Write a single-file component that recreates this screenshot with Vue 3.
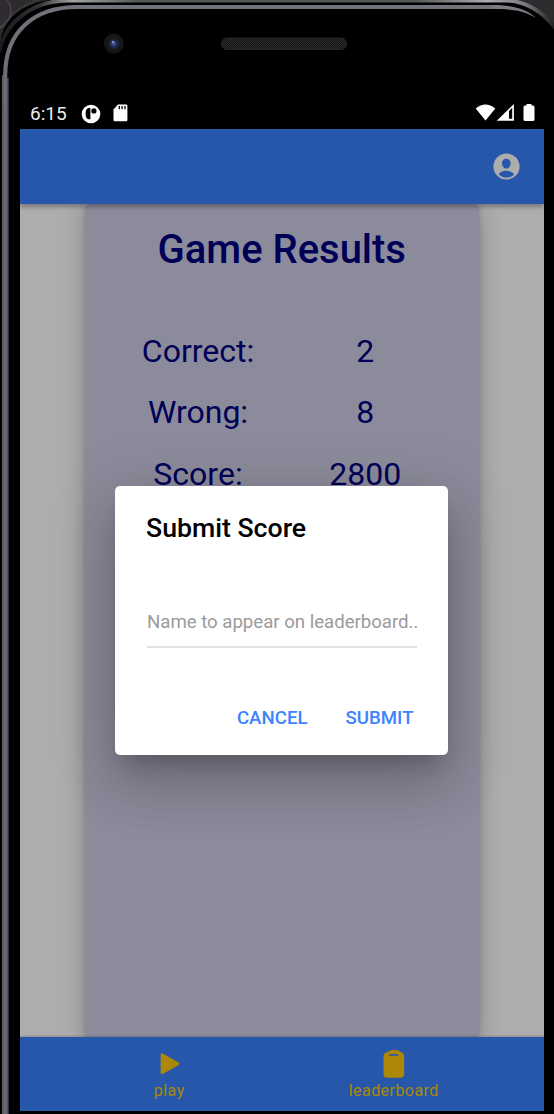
<script setup>
const results = [
  { label: 'Correct:', value: '2' },
  { label: 'Wrong:', value: '8' },
  { label: 'Score:', value: '2800' },
]
</script>

<template>
  <div class="device">
    <svg class="bezel" width="554" height="1114" viewBox="0 0 554 1114" aria-hidden="true">
      <defs>
        <linearGradient id="rim" x1="0" y1="0" x2="0" y2="120" gradientUnits="userSpaceOnUse">
          <stop offset="0" stop-color="#73747b" /><stop offset="1" stop-color="#656a73" />
        </linearGradient>
        <linearGradient id="outer" x1="0" y1="0" x2="554" y2="0" gradientUnits="userSpaceOnUse">
          <stop offset="0" stop-color="#1a1b1d" /><stop offset=".07" stop-color="#303234" />
          <stop offset=".13" stop-color="#a1a4a5" /><stop offset=".25" stop-color="#555858" />
          <stop offset=".75" stop-color="#555858" /><stop offset=".88" stop-color="#aaabb0" />
          <stop offset=".95" stop-color="#77777c" /><stop offset="1" stop-color="#222" />
        </linearGradient>
        <radialGradient id="lens"><stop offset="0" stop-color="#5968a0" /><stop offset=".35" stop-color="#303d70" /><stop offset=".8" stop-color="#182040" /><stop offset="1" stop-color="#252832" /></radialGradient>
        <pattern id="mesh" width="2" height="2" patternUnits="userSpaceOnUse">
          <rect width="2" height="2" fill="#171817" /><path d="M0 0h1v1H0zM1 1h1v1H1z" fill="#292b29" />
        </pattern>
      </defs>
      <rect width="554" height="1114" fill="#2c2c2e" />
      <circle cx="-7" cy="11" r="18" fill="#302b31" stroke="#555056" />
      <path d="M0 28C13 11 26 3 42-1" fill="none" stroke="#777" stroke-dasharray="1 2" />
      <path d="M509 0C529 3 543 10 554 25" fill="none" stroke="#777" stroke-dasharray="1 2" />
      <path d="M0 1114V48C0 18 25-1 65-1H500C530 0 546 12 556 33V1114Z" fill="#000" />
      <path d="M-1 52C5 23 31 .5 69 .5H506C529 1.5 544 13 556 29" fill="none" stroke="url(#outer)" stroke-width="4" />
      <path d="M5.2 1114V75C5.2 31 35 7 77 7H500" fill="none" stroke="url(#rim)" stroke-width="4.2" />
      <path d="M2.5 1114V75" fill="none" stroke="#5f5b5d" stroke-width="1.2" />
      <path d="M7.8 1114V78" fill="none" stroke="#4b525c" stroke-width="1.6" />
      <path d="M492 5C512 5 527 9 536 18C522 10 512 9 492 9Z" fill="#7b7b83" />
      <circle cx="113.7" cy="43.6" r="10" fill="#161616" />
      <circle cx="113.8" cy="43.8" r="5.4" fill="url(#lens)" />
      <circle cx="113" cy="42" r="1.2" fill="#8792bd" />
      <rect x="221.5" y="38" width="125" height="11.5" rx="5.5" fill="url(#mesh)" stroke="#252625" />
    </svg>

    <div class="screen">
      <div class="status">
        <span class="clock">6:15</span>
        <svg class="app-icon" width="20" height="20" viewBox="0 0 20 20">
          <circle cx="10" cy="10" r="9.3" fill="#fff" />
          <path d="M7.4 4.1H9.4V15.3H7.4Q4.6 14.5 4.6 9.7T7.4 4.1Z" fill="#000" /><circle cx="12.9" cy="6.9" r="2.6" fill="#000" />
        </svg>
        <svg class="sd" width="15" height="18" viewBox="0 0 15 18">
          <path d="M5 .6H13Q14.4.6 14.4 2V16Q14.4 17.3 13 17.3H1.8Q.5 17.3.5 16V5.4Z" fill="#fff" /><path d="M6.3 2V5.2M9.1 2V5.2M12 2V5.2" stroke="#000" stroke-width="1.3" />
        </svg>
        <span class="spacer"></span>
        <svg class="signals" width="62" height="20" viewBox="0 0 62 20">
          <path d="M.7 5.4Q10.5-2.4 20.3 5.4L10.5 17.4Z" fill="#fff" />
          <path d="M21.7 17.7L38.9 1V17.7Z" fill="#fff" /><path d="M34 8V15.8H37.2V4.8Z" fill="#000" />
          <path d="M51.5 1H56.5V2.4H58Q59.5 2.4 59.5 4V16.5Q59.5 18 58 18H50Q48.5 18 48.5 16.5V4Q48.5 2.4 50 2.4H51.5Z" fill="#fff" />
        </svg>
      </div>

      <header class="toolbar">
        <svg width="27" height="27" viewBox="0 0 27 27">
          <path fill="#adadad" fill-rule="evenodd" d="M13.5.4A13.1 13.1 0 1 1 13.5 26.6A13.1 13.1 0 0 1 13.5.4ZM13.3 5.7C10.7 5.7 8.9 7.7 9 10.5C9.1 13.3 11 15.6 13.3 15.6S17.5 13.3 17.6 10.5C17.8 7.7 15.9 5.7 13.3 5.7ZM13.4 17.8C9.9 17.8 6.9 19.3 5.8 21.2C7.6 23.4 10.6 24.6 13.4 24.6S19.3 23.4 21.2 21.2C20 19.3 16.9 17.8 13.4 17.8Z" />
        </svg>
      </header>

      <main class="content">
        <section class="card">
          <h1>Game Results</h1>
          <div class="results">
            <div v-for="r in results" :key="r.label" class="row"><span>{{ r.label }}</span><span>{{ r.value }}</span></div>
          </div>
        </section>
      </main>

      <nav class="tabs">
        <div class="tab">
          <svg width="27" height="28" viewBox="0 0 27 28"><path d="M4.6 4.9Q4.6 2.4 6.9 3.6L22.6 12.5Q24.5 13.7 22.6 15L6.9 23.9Q4.6 25 4.6 22.6Z" fill="#ad8706" /></svg>
          <span>play</span>
        </div>
        <div class="tab">
          <svg width="27" height="28" viewBox="0 0 27 28"><path fill="#ad8706" fill-rule="evenodd" d="M7.8 2Q9 .9 10 .4Q10.8 0 11.8 0H16.6Q17.6 0 18.4.4Q19.4.9 20.6 2Q24.1 2.9 24.1 6V24.3Q24.1 27.7 20.8 27.7H6.8Q3.5 27.7 3.5 24.3V6Q3.5 2.9 7.8 2ZM9.9 4Q9 4 9 4.9T9.9 5.8H17.6Q18.5 5.8 18.5 4.9T17.6 4Z" /></svg>
          <span>leaderboard</span>
        </div>
      </nav>
    </div>

    <div class="dialog" role="dialog">
      <h2>Submit Score</h2>
      <div class="field">Name to appear on leaderboard...</div>
      <div class="actions"><button>CANCEL</button><button>SUBMIT</button></div>
    </div>
  </div>
</template>

<style>
html, body { margin: 0; overflow: hidden; background: #000; }
</style>

<style scoped>
* { box-sizing: border-box; }
.device { position: relative; width: 554px; height: 1114px; overflow: hidden; padding: 98px 10px 3px 20px; background: #000; font-family: Roboto, sans-serif; }
.bezel { position: absolute; left: 0; top: 0; }
.screen { position: relative; height: 1013px; display: flex; flex-direction: column; overflow: hidden; background: #000; }
.status { height: 31px; flex: none; display: flex; align-items: center; padding: 1px 7.5px 0 10px; color: #fff; }
.clock { width: 50.5px; font-size: 19px; line-height: 30px; color: #ededed; }
.app-icon { margin: -1px 12px 0 0; }
.sd { margin-top: -2px; }
.signals { margin-top: -2px; }
.spacer { flex: 1; }
.toolbar { position: relative; z-index: 1; height: 75px; flex: none; display: flex; justify-content: flex-end; align-items: center; padding-right: 24px; background: #2657ab; box-shadow: 0 2px 5px rgba(0,0,0,.2), 0 5px 3px -1px rgba(0,0,0,.12); }
.content { flex: 1; padding: 0 65px; background: #adadad; overflow: hidden; }
.card { width: 393.5px; height: 833px; border-radius: 5px; padding-top: 20px; text-align: center; color: #000057; background: #8c8b9b; box-shadow: 0 4px 21px rgba(0,0,0,.26), 0 1px 4px rgba(0,0,0,.15); }
h1 { margin: 0; font-size: 40px; line-height: 52px; font-weight: 500; letter-spacing: -.02px; }
.results { margin-top: 45px; padding: 0 36.5px; font-size: 32px; line-height: 61.3px; }
.row { display: grid; grid-template-columns: 153px 1fr; }
.row span:last-child { padding-left: 14px; }
.tabs { height: 74px; flex: none; display: flex; position: relative; background: #2657ab; box-shadow: 0 -1px 2px rgba(0,0,0,.2); padding: 0 37px; }
.tab { width: 224.5px; display: flex; flex-direction: column; align-items: center; padding-top: 13px; color: #ad8706; font-size: 16px; line-height: 20px; letter-spacing: .45px; }
.tab span { margin-top: 3px; }
.dialog { position: absolute; left: 115px; top: 485.5px; width: 333.3px; height: 269.8px; border-radius: 5px; background: #fff; padding: 26px 31px 20px; display: flex; flex-direction: column; box-shadow: 0 15px 20px -9px rgba(0,0,0,.2), 0 32px 50px 4px rgba(0,0,0,.14), 0 12px 61px 10px rgba(0,0,0,.12); }
h2 { margin: 0; color: #000; font-size: 26.67px; line-height: 32px; font-weight: 500; }
.field { width: 269.5px; height: 46px; margin: 58px 0 0 1px; padding-top: 9px; border-bottom: 2px solid #e1e1e1; overflow: hidden; white-space: nowrap; color: #9b9b9b; font-size: 18.67px; line-height: 22px; letter-spacing: -.03px; }
.actions { display: flex; justify-content: flex-end; gap: 38px; margin-top: 53.5px; padding-right: 3.8px; }
button { border: 0; padding: 0; background: none; color: #3d82ff; font: 500 18.67px/34px Roboto, sans-serif; }
</style>
